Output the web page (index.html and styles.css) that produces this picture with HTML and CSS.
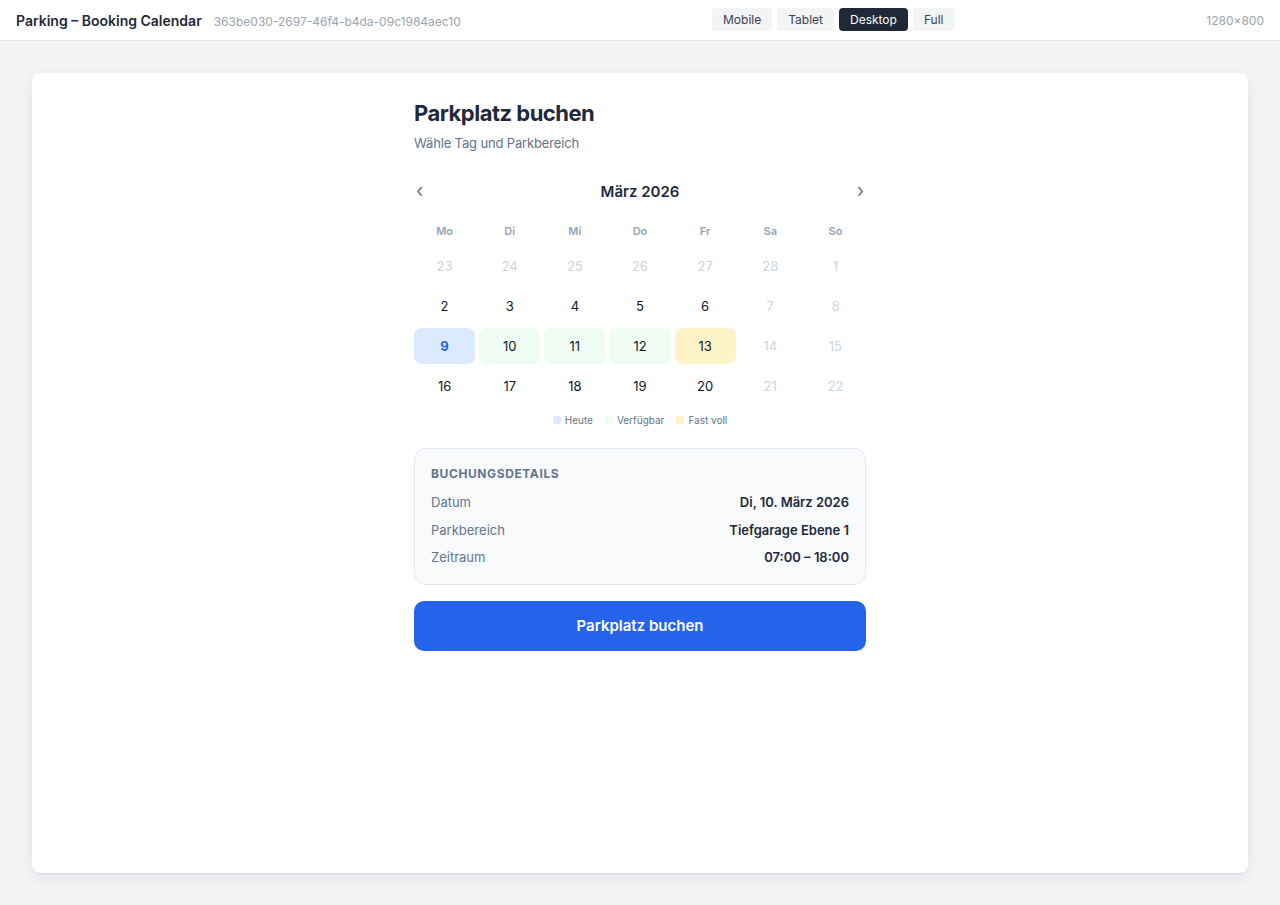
FILE: index.html
```html
<!DOCTYPE html>
<html lang="de">
<head>
<meta charset="utf-8">
<title>Parking – Booking Calendar</title>
<link rel="stylesheet" href="styles.css">
</head>
<body>
<header class="topbar">
  <div class="topbar-left">
    <span class="app-title">Parking – Booking Calendar</span>
    <span class="app-id">363be030-2697-46f4-b4da-09c1984aec10</span>
  </div>
  <nav class="viewports">
    <button class="vp">Mobile</button>
    <button class="vp">Tablet</button>
    <button class="vp active">Desktop</button>
    <button class="vp">Full</button>
  </nav>
  <div class="size">1280×800</div>
</header>
<main class="stage">
  <section class="card">
    <div class="booking">
      <h1 class="title">Parkplatz buchen</h1>
      <p class="subtitle">Wähle Tag und Parkbereich</p>

      <div class="cal-header">
        <button class="nav-arrow">‹</button>
        <div class="month">März 2026</div>
        <button class="nav-arrow">›</button>
      </div>

      <div class="weekdays">
        <span>Mo</span><span>Di</span><span>Mi</span><span>Do</span><span>Fr</span><span>Sa</span><span>So</span>
      </div>

      <div class="days">
        <span class="day muted">23</span><span class="day muted">24</span><span class="day muted">25</span><span class="day muted">26</span><span class="day muted">27</span><span class="day muted">28</span><span class="day muted">1</span>
        <span class="day">2</span><span class="day">3</span><span class="day">4</span><span class="day">5</span><span class="day">6</span><span class="day muted">7</span><span class="day muted">8</span>
        <span class="day today">9</span><span class="day free">10</span><span class="day free">11</span><span class="day free">12</span><span class="day almost">13</span><span class="day muted">14</span><span class="day muted">15</span>
        <span class="day">16</span><span class="day">17</span><span class="day">18</span><span class="day">19</span><span class="day">20</span><span class="day muted">21</span><span class="day muted">22</span>
      </div>

      <div class="legend">
        <span class="legend-item"><i class="swatch sw-today"></i>Heute</span>
        <span class="legend-item"><i class="swatch sw-free"></i>Verfügbar</span>
        <span class="legend-item"><i class="swatch sw-almost"></i>Fast voll</span>
      </div>

      <div class="details">
        <div class="details-title">Buchungsdetails</div>
        <div class="row"><span class="label">Datum</span><span class="value">Di, 10. März 2026</span></div>
        <div class="row"><span class="label">Parkbereich</span><span class="value">Tiefgarage Ebene 1</span></div>
        <div class="row"><span class="label">Zeitraum</span><span class="value">07:00 – 18:00</span></div>
      </div>

      <button class="book">Parkplatz buchen</button>
    </div>
  </section>
</main>
</body>
</html>
```

FILE: styles.css
```css
* { box-sizing: border-box; }
html, body { margin: 0; padding: 0; }
body {
  font-family: Inter, "Noto Sans", "Liberation Sans", sans-serif;
  background: #f3f4f6;
  color: #1e293b;
  height: 905px;
  overflow: hidden;
}
button { font-family: inherit; cursor: pointer; }

.topbar {
  height: 41px;
  background: #ffffff;
  border-bottom: 1px solid #e5e7eb;
  display: flex;
  align-items: center;
  padding: 0 16px;
}
.topbar-left { display: flex; align-items: baseline; gap: 12px; flex: 0 0 696px; }
.app-title { font-size: 14px; font-weight: 600; color: #1f2937; }
.app-id { font-size: 12px; color: #9ca3af; }
.viewports { display: flex; gap: 5px; margin-top: -1px; }
.vp {
  height: 23px;
  padding: 0 11px;
  border: none;
  border-radius: 4px;
  background: #f3f4f6;
  color: #374151;
  font-size: 12px;
}
.vp.active { background: #1f2937; color: #ffffff; }
.size { font-size: 12px; color: #9ca3af; margin-left: auto; }

.stage { padding: 32px; height: 864px; }
.card {
  background: #ffffff;
  border-radius: 8px;
  height: 800px;
  box-shadow: 0 1px 2px rgba(15, 23, 42, 0.06), 0 4px 14px rgba(15, 23, 42, 0.08);
  padding: 24px 0;
  display: flex;
  justify-content: center;
}
.booking { width: 452px; }

.title {
  margin: 0;
  font-size: 22px;
  line-height: 32px;
  font-weight: 700;
  color: #1e293b;
  letter-spacing: -0.5px;
}
.subtitle {
  margin: 4px 0 0;
  font-size: 13px;
  line-height: 20px;
  color: #64748b;
  letter-spacing: -0.15px;
}

.cal-header {
  margin-top: 24px;
  height: 28px;
  display: flex;
  align-items: center;
  justify-content: space-between;
}
.nav-arrow {
  border: none;
  background: none;
  padding: 0 2px;
  font-size: 19px;
  line-height: 28px;
  color: #64748b;
}
.month { font-size: 15px; font-weight: 600; color: #1e293b; }

.weekdays {
  margin-top: 18px;
  display: grid;
  grid-template-columns: repeat(7, 1fr);
  gap: 4px;
  font-size: 11px;
  line-height: 16px;
  font-weight: 600;
  color: #94a3b8;
  text-align: center;
}

.days {
  margin-top: 9px;
  display: grid;
  grid-template-columns: repeat(7, 1fr);
  gap: 4px;
}
.day {
  height: 36px;
  display: flex;
  align-items: center;
  justify-content: center;
  border-radius: 8px;
  font-size: 13px;
  color: #0f172a;
}
.day.muted { color: #cbd5e1; }
.day.today { background: #dbeafe; color: #2563eb; font-weight: 700; }
.day.free { background: #effcf3; }
.day.almost { background: #fef3c7; }

.legend {
  margin-top: 8px;
  display: flex;
  justify-content: center;
  gap: 12px;
  font-size: 10px;
  line-height: 16px;
  color: #64748b;
}
.legend-item { display: flex; align-items: center; gap: 4px; }
.swatch { width: 8px; height: 8px; border-radius: 2px; display: inline-block; }
.sw-today { background: #dbeafe; }
.sw-free { background: #effcf3; }
.sw-almost { background: #fef3c7; }

.details {
  margin-top: 20px;
  background: #f8fafc;
  border: 1px solid #e2e8f0;
  border-radius: 12px;
  padding: 17px 16px 12px;
}
.details-title {
  font-size: 12px;
  line-height: 16px;
  font-weight: 700;
  letter-spacing: 0.6px;
  text-transform: uppercase;
  color: #64748b;
  margin-bottom: 7px;
}
.row {
  display: flex;
  justify-content: space-between;
  padding: 4px 0;
  font-size: 13px;
  line-height: 19.5px;
}
.label { color: #64748b; }
.value { color: #1e293b; font-weight: 600; }

.book {
  margin-top: 16px;
  width: 100%;
  height: 50px;
  border: none;
  border-radius: 10px;
  background: #2563eb;
  color: #ffffff;
  font-size: 15px;
  font-weight: 600;
}
```
